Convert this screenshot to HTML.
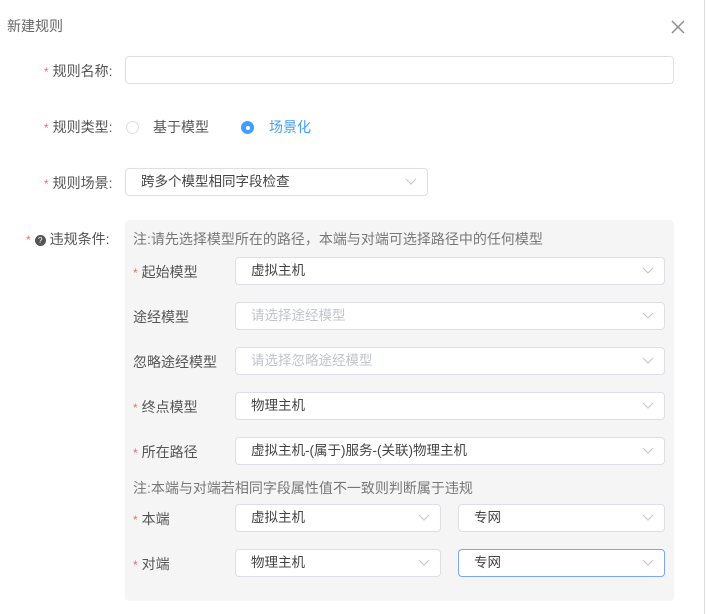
<!DOCTYPE html>
<html><head><meta charset="utf-8"><style>
*{box-sizing:border-box;margin:0;padding:0}
body{width:707px;height:614px;background:#fff;font-family:"Liberation Sans","Noto Sans CJK SC",sans-serif;font-size:14px;color:#555;position:relative;overflow:hidden}
.a{position:absolute;white-space:nowrap}
.star{color:#f56c6c;margin-right:4px;font-size:12px}
.box{position:absolute;border:1px solid #dcdfe6;border-radius:4px;background:#fff;height:28px;line-height:26px;padding-left:15px;color:#444;font-size:13.5px}
.box.ph{color:#c0c4cc}
.box svg{position:absolute;right:10px;top:9px}
.blue{border-color:#7aa6f5}
</style></head><body>
<div class="a" style="left:7px;top:16px;color:#666">新建规则</div>
<svg class="a" style="left:671px;top:20px" width="14" height="14"><path d="M1 1L13 13M13 1L1 13" stroke="#888" stroke-width="1.4"/></svg>
<div style="position:absolute;right:2px;top:0;width:1px;height:614px;background:#ddd"></div>

<div class="a" style="left:44px;top:61px"><span class="star">*</span>规则名称:</div>
<div class="box" style="left:125px;top:56px;width:549px"></div>

<div class="a" style="left:44px;top:117px"><span class="star">*</span>规则类型:</div>
<div class="a" style="left:126px;top:121px;width:13px;height:13px;border:1px solid #dcdfe6;border-radius:50%"></div>
<div class="a" style="left:153px;top:117px">基于模型</div>
<div class="a" style="left:241px;top:121px;width:13px;height:13px;background:#409eff;border-radius:50%"><div style="width:4px;height:4px;background:#fff;border-radius:50%;margin:4.5px"></div></div>
<div class="a" style="left:269px;top:117px;color:#409eff">场景化</div>

<div class="a" style="left:44px;top:173px"><span class="star">*</span>规则场景:</div>
<div class="box" style="left:125px;top:168px;width:303px">跨多个模型相同字段检查<svg width="12" height="8"><path d="M1 1L6 6L11 1" fill="none" stroke="#c0c4cc"/></svg></div>

<div class="a" style="left:26px;top:229px"><span class="star">*</span><span style="display:inline-block;width:11px;height:11px;border-radius:50%;background:#555;color:#fff;font-size:8px;line-height:11px;text-align:center;vertical-align:1px;margin-right:4px">?</span>违规条件:</div>
<div class="a" style="left:125px;top:220px;width:549px;height:381px;background:#f5f5f5;border-radius:4px"></div>
<div class="a" style="left:133px;top:229px;color:#777">注:请先选择模型所在的路径，本端与对端可选择路径中的任何模型</div>

<div class="a" style="left:133px;top:262px"><span class="star">*</span>起始模型</div>
<div class="box" style="left:235px;top:257px;width:430px">虚拟主机<svg width="12" height="8"><path d="M1 1L6 6L11 1" fill="none" stroke="#c0c4cc"/></svg></div>
<div class="a" style="left:133px;top:307px">途经模型</div>
<div class="box ph" style="left:235px;top:302px;width:430px">请选择途经模型<svg width="12" height="8"><path d="M1 1L6 6L11 1" fill="none" stroke="#c0c4cc"/></svg></div>
<div class="a" style="left:133px;top:352px">忽略途经模型</div>
<div class="box ph" style="left:235px;top:347px;width:430px">请选择忽略途经模型<svg width="12" height="8"><path d="M1 1L6 6L11 1" fill="none" stroke="#c0c4cc"/></svg></div>
<div class="a" style="left:133px;top:397px"><span class="star">*</span>终点模型</div>
<div class="box" style="left:235px;top:392px;width:430px">物理主机<svg width="12" height="8"><path d="M1 1L6 6L11 1" fill="none" stroke="#c0c4cc"/></svg></div>
<div class="a" style="left:133px;top:442px"><span class="star">*</span>所在路径</div>
<div class="box" style="left:235px;top:437px;width:430px">虚拟主机-(属于)服务-(关联)物理主机<svg width="12" height="8"><path d="M1 1L6 6L11 1" fill="none" stroke="#c0c4cc"/></svg></div>
<div class="a" style="left:133px;top:478px;color:#777">注:本端与对端若相同字段属性值不一致则判断属于违规</div>
<div class="a" style="left:133px;top:509px"><span class="star">*</span>本端</div>
<div class="box" style="left:235px;top:504px;width:206px">虚拟主机<svg width="12" height="8"><path d="M1 1L6 6L11 1" fill="none" stroke="#c0c4cc"/></svg></div>
<div class="box" style="left:458px;top:504px;width:207px">专网<svg width="12" height="8"><path d="M1 1L6 6L11 1" fill="none" stroke="#c0c4cc"/></svg></div>
<div class="a" style="left:133px;top:554px"><span class="star">*</span>对端</div>
<div class="box" style="left:235px;top:549px;width:206px">物理主机<svg width="12" height="8"><path d="M1 1L6 6L11 1" fill="none" stroke="#c0c4cc"/></svg></div>
<div class="box blue" style="left:458px;top:549px;width:207px">专网<svg width="12" height="8"><path d="M1 1L6 6L11 1" fill="none" stroke="#c0c4cc"/></svg></div>
</body></html>
